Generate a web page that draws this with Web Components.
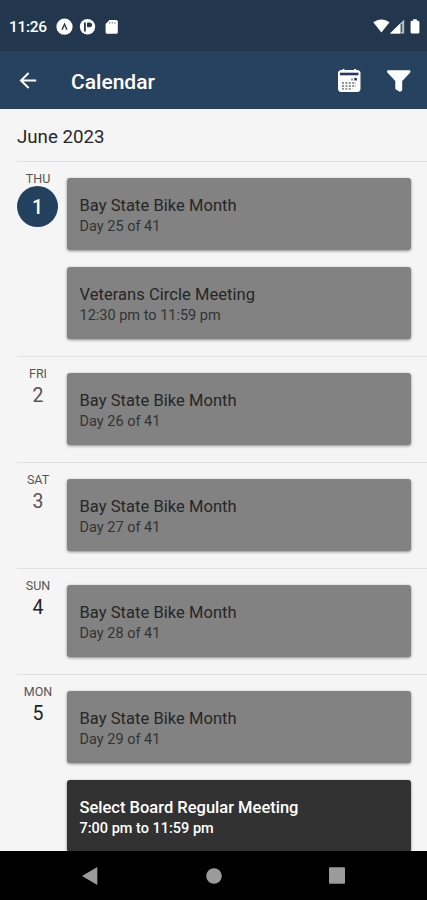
<!DOCTYPE html>
<html lang="en">
<head>
<meta charset="utf-8">
<title>Calendar</title>
<style>
  body {
    margin: 0;
    height: 900px;
    overflow: hidden;
    font-family: Roboto, sans-serif;
    background: #f5f5f5;
  }
</style>
</head>
<body>
<calendar-screen>
  <status-bar slot="top" time="11:26"></status-bar>
  <app-bar slot="top">Calendar</app-bar>
  <month-heading>June 2023</month-heading>
  <agenda-day name="THU" number="1" today>
    <event-card when="Day 25 of 41" past>Bay State Bike Month</event-card>
    <event-card when="12:30 pm to 11:59 pm" past>Veterans Circle Meeting</event-card>
  </agenda-day>
  <agenda-day name="FRI" number="2" past>
    <event-card when="Day 26 of 41" past>Bay State Bike Month</event-card>
  </agenda-day>
  <agenda-day name="SAT" number="3" past>
    <event-card when="Day 27 of 41" past>Bay State Bike Month</event-card>
  </agenda-day>
  <agenda-day name="SUN" number="4">
    <event-card when="Day 28 of 41" past>Bay State Bike Month</event-card>
  </agenda-day>
  <agenda-day name="MON" number="5">
    <event-card when="Day 29 of 41" past>Bay State Bike Month</event-card>
    <event-card when="7:00 pm to 11:59 pm">Select Board Regular Meeting</event-card>
  </agenda-day>
  <nav-bar slot="bottom"></nav-bar>
</calendar-screen>

<script>
(function () {
  function makeTemplate(html) {
    const template = document.createElement("template");
    template.innerHTML = html;
    return template;
  }

  class BaseElement extends HTMLElement {
    constructor() {
      super();
      this._shadowRoot = this.attachShadow({ mode: "open" });
      this._shadowRoot.appendChild(this.constructor.template.content.cloneNode(true));
    }

    _setText(id, attribute) {
      this._shadowRoot.getElementById(id).textContent = this.getAttribute(attribute);
    }
  }

  class CalendarScreen extends BaseElement {
    static template = makeTemplate(`
      <style>
        :host {
          display: flex;
          flex-direction: column;
          height: 900px;
        }
        header, footer { flex: none; }
        main {
          flex: 1;
          min-height: 0;
          overflow: hidden;
        }
      </style>
      <header><slot name="top"></slot></header>
      <main><slot></slot></main>
      <footer><slot name="bottom"></slot></footer>
    `);
  }

  class StatusBar extends BaseElement {
    static template = makeTemplate(`
      <style>
        :host {
          display: flex;
          align-items: center;
          justify-content: space-between;
          box-sizing: border-box;
          height: 51px;
          padding: 2px 6px 0 9px;
          background: #22374e;
          color: #fff;
        }
        div { display: flex; align-items: center; }
        #time {
          width: 38px;
          margin-right: 9px;
          font-size: 15.5px;
          font-weight: 500;
          line-height: 20px;
          letter-spacing: -0.3px;
          white-space: nowrap;
        }
        svg { display: block; }
      </style>
      <div>
        <span id="time"></span>
        <svg width="64" height="18" viewBox="0 0 64 18">
          <circle cx="8.5" cy="8.7" r="8.1" fill="#fff"/>
          <path d="M6 11.700 8.500 6.200l2.500 5.500" fill="none" stroke="#22374e" stroke-width="1.4"/>
          <circle cx="31.5" cy="8.700" r="7.700" fill="#fff"/>
          <path d="M28 4.600h1.800v8.800H28z" fill="#22374e"/>
          <path d="M31.500 5h2.300a1.900 1.900 0 0 1 0 3.800h-2.300z" fill="#22374e" stroke="#22374e"/>
          <path d="M53.500 2h6.800a1.500 1.500 0 0 1 1.500 1.500v10.800a1.500 1.500 0 0 1-1.500 1.500h-9.200a1.500 1.500 0 0 1-1.500-1.500V5.900z" fill="#fff"/>
          <path d="M53.500 4v1.800M56.200 4v1.800M58.900 4v1.800" stroke="#8b97a5" stroke-width="1.200"/>
        </svg>
      </div>
      <svg width="48" height="18" viewBox="0 0 48 18">
        <path d="M.3 4.300C5 .4 12 .4 16.500 4.300L8.400 14.600z" fill="#fff"/>
        <path d="M31.200 1.500V15.500H17z" fill="#b9c0c8"/>
        <path d="M27 5.700v9.800H17z" fill="#fff"/>
        <path d="M28.500 6v8.300" stroke="#53616f" stroke-width="1.500"/>
        <path d="M40.200 1.200h3.600v1.600H45a1.400 1.400 0 0 1 1.400 1.400v10a1.400 1.400 0 0 1-1.400 1.400h-6a1.400 1.400 0 0 1-1.400-1.400v-10A1.400 1.400 0 0 1 39 2.800h1.200z" fill="#fff"/>
      </svg>
    `);

    connectedCallback() {
      this._setText("time", "time");
    }
  }

  class AppBar extends BaseElement {
    static template = makeTemplate(`
      <style>
        :host {
          display: flex;
          align-items: center;
          box-sizing: border-box;
          height: 58px;
          padding: 2px 16px 0 19px;
          background: #27425f;
          color: #fff;
        }
        h1 {
          flex: 1;
          margin: 1px 0 0 34px;
          font-size: 21px;
          font-weight: 500;
          line-height: 28px;
        }
        svg { display: block; }
        .filter { margin-left: 25px; }
      </style>
      <svg width="18" height="18" viewBox="0 0 18 18" fill="none" stroke="#fff" stroke-width="2">
        <path d="M17.200 8.500H2M9.600 1 2 8.500l7.600 7.500"/>
      </svg>
      <h1><slot></slot></h1>
      <svg width="24" height="24" viewBox="0 0 24 24">
        <rect x="1" y="1" width="22.500" height="22" rx="3.500" fill="#fff"/>
        <path d="M6.500 0v2.500M18 0v2.500" stroke="#fff" stroke-width="2"/>
        <path d="M3 5h18.500" stroke="#27356a" stroke-width="2.600"/>
        <g stroke="#8b90a0" stroke-width="1.900" stroke-dasharray="2 1.400">
          <path d="M14 10.500h3M5 14h14M5 17h14M5 19.900h10.500"/>
        </g>
        <path d="M17.300 10.200h2.500" stroke="#29235c" stroke-width="2.600"/>
      </svg>
      <svg class="filter" width="25" height="24" viewBox="0 0 25 24">
        <path d="M1.700 1.300h22.200q1.200 1-.1 2.700L16.200 12v9.300q-1.300 1.800-3 1.300L9.300 20v-8L1.800 4Q.5 2.300 1.700 1.300z" fill="#fff"/>
      </svg>
    `);
  }

  class MonthHeading extends BaseElement {
    static template = makeTemplate(`
      <style>
        :host {
          display: block;
          box-sizing: border-box;
          height: 52px;
          padding: 16px 17px 0;
          font-size: 18.700px;
          line-height: 24px;
          color: #282828;
        }
      </style>
      <slot></slot>
    `);
  }

  class AgendaDay extends BaseElement {
    static template = makeTemplate(`
      <style>
        :host {
          display: flex;
          margin-left: 17px;
          border-top: 1px solid #e0e0e0;
          color: #222;
        }
        :host([past]) { color: #555; }
        .date {
          display: flex;
          flex-direction: column;
          align-items: center;
          width: 42px;
          padding-top: 9px;
        }
        #name {
          font-size: 12.500px;
          line-height: 16px;
          color: #555;
        }
        #number {
          font-size: 19.500px;
          line-height: 27px;
        }
        :host([today]) #number {
          width: 41px;
          height: 41px;
          margin: -1px 1px 0 0;
          border-radius: 50%;
          background: #24405f;
          color: #fff;
          font-weight: 500;
          line-height: 44px;
          text-align: center;
        }
        .events {
          flex: 1;
          display: flex;
          flex-direction: column;
          gap: 17px;
          padding: 16px 16px 17px 8px;
        }
      </style>
      <div class="date">
        <span id="name"></span>
        <span id="number"></span>
      </div>
      <div class="events"><slot></slot></div>
    `);

    connectedCallback() {
      this._setText("name", "name");
      this._setText("number", "number");
    }
  }

  class EventCard extends BaseElement {
    static template = makeTemplate(`
      <style>
        :host {
          display: block;
          box-sizing: border-box;
          height: 72px;
          padding: 17px 12.500px 0;
          border-radius: 3px;
          background: #323232;
          box-shadow: 0 1px 3px rgba(0, 0, 0, 0.45);
          color: #fff;
          font-weight: 500;
          white-space: nowrap;
        }
        :host([past]) {
          background: #828282;
          color: #262626;
          font-weight: 400;
        }
        .title {
          font-size: 16.500px;
          line-height: 22px;
        }
        :host([past]) .title { letter-spacing: 0.05px; }
        #when {
          font-size: 14.500px;
          line-height: 20px;
        }
        :host([past]) #when { color: #333; }
      </style>
      <div class="title"><slot></slot></div>
      <div id="when"></div>
    `);

    connectedCallback() {
      this._setText("when", "when");
    }
  }

  class NavBar extends BaseElement {
    static template = makeTemplate(`
      <style>
        :host {
          display: flex;
          align-items: center;
          justify-content: space-between;
          box-sizing: border-box;
          height: 49px;
          padding: 0 82px;
          background: #000;
        }
        svg { display: block; fill: #9b9b9b; }
      </style>
      <svg width="16" height="18" viewBox="0 0 16 18"><path d="M15.300 0v18L0 9z"/></svg>
      <svg width="16" height="16" viewBox="0 0 16 16"><circle cx="8" cy="8" r="7.800"/></svg>
      <svg width="16" height="17" viewBox="0 0 16 17"><rect y=".2" width="16" height="16.600" rx="1"/></svg>
    `);
  }

  customElements.define("calendar-screen", CalendarScreen);
  customElements.define("status-bar", StatusBar);
  customElements.define("app-bar", AppBar);
  customElements.define("month-heading", MonthHeading);
  customElements.define("agenda-day", AgendaDay);
  customElements.define("event-card", EventCard);
  customElements.define("nav-bar", NavBar);
})();
</script>
</body>
</html>
